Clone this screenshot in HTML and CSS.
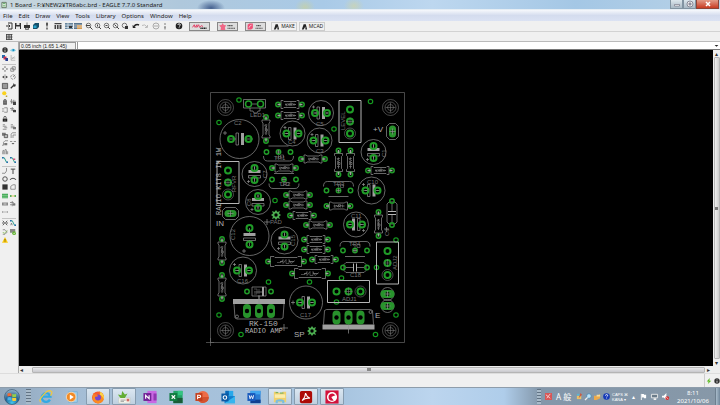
FILE: index.html
```html
<!DOCTYPE html>
<html lang="en">
<head>
<meta charset="utf-8">
<title>1 Board - EAGLE 7.7.0 Standard</title>
<link rel="stylesheet" href="styles.css">
</head>
<body>
<header class="titlebar">
  <svg class="app-icon" viewBox="0 0 8 8"><path d="M1 1h5v6H1z" fill="#f4f8f0" stroke="#59705a"/><path d="M2 2.500h3M2 5h3" stroke="#3c9a45"/></svg>
  <h1>1 Board - F:¥NEW2¥TR6abc.brd - EAGLE 7.7.0 Standard</h1>
  <div class="win-buttons">
    <button aria-label="Minimize"><svg viewBox="0 0 8 8"><path d="M1.500 4.500h5v1.500h-5z" fill="#fff" stroke="#667" stroke-width=".6"/></svg></button>
    <button aria-label="Restore"><svg viewBox="0 0 8 8"><circle cx="4" cy="4" r="3" fill="#eee" stroke="#667" stroke-width=".7"/><circle cx="4" cy="4" r="1.200" fill="#aab" stroke="#667" stroke-width=".6"/></svg></button>
    <button class="close" aria-label="Close"><svg viewBox="0 0 8 8"><path d="M2 2l4 4M6 2l-4 4" stroke="#fff" stroke-width="1.500"/></svg></button>
  </div>
</header>
<nav class="menubar">
  <button>File</button><button>Edit</button><button>Draw</button><button>View</button><button>Tools</button><button>Library</button><button>Options</button><button>Window</button><button>Help</button>
</nav>
<div class="toolbar">
  <div class="group">
    <button aria-label="Open"><svg viewBox="0 0 8 8"><path d="M3 1h4v6H3M1 4h4M3.500 2.500L5 4 3.500 5.500" fill="none" stroke="#333"/></svg></button>
    <button aria-label="Save"><svg viewBox="0 0 8 8"><path d="M1 1h6v6H1z" fill="#333"/><path d="M2.500 1h3v2h-3zM2 4.500h4V7H2z" fill="#e8e8e8"/></svg></button>
    <button aria-label="Print"><svg viewBox="0 0 8 8"><path d="M1 3h6v3H1z" fill="#333"/><path d="M4 .5v2.500M2.500 6h3v1.500h-3z" fill="#fff" stroke="#444" stroke-width=".7"/></svg></button>
    <button aria-label="CAM"><svg viewBox="0 0 8 8"><path d="M1 3l2-2h4v4L5 7H1z" fill="#16506a"/><path d="M1.500 3.500h3v2.500h-3z" fill="#29a4cc"/></svg></button>
  </div>
  <div class="group"><button aria-label="Schematic"><svg viewBox="0 0 8 8"><path d="M4 .5v4M4 5.500v2M3 2h2" stroke="#333" stroke-width="1.200"/></svg></button></div>
  <div class="group"><button aria-label="Library"><svg viewBox="0 0 8 8"><path d="M.5 1h7v1.200h-7zM.5 3h1.600v4H.5zM3 3h1.600v4H3zM5.500 3h2v4h-2z" fill="#444"/></svg></button></div>
  <div class="group">
    <button aria-label="Script"><svg viewBox="0 0 8 8"><path d="M0 1h8v6H0z" fill="#68869e"/><path d="M0 3h8M0 5.500h8M3 1v6" stroke="#dfe8ee" stroke-width=".7"/><path d="M4 4h3v2H4z" fill="#333"/></svg></button>
    <button aria-label="ULP"><svg viewBox="0 0 8 8"><path d="M0 1h8v6H0z" fill="#58748c"/><path d="M3 3h5v4H3z" fill="#d49a52"/><path d="M0 3h8M0 5h8" stroke="#eee" stroke-width=".6"/></svg></button>
  </div>
  <div class="group">
    <button aria-label="Zoom fit"><svg viewBox="0 0 8 8"><circle cx="3.500" cy="3.500" r="2.300" class="lens"/><path d="M5 5l2.500 2.500M1 3.500h4" class="ink"/></svg></button>
    <button aria-label="Zoom in"><svg viewBox="0 0 8 8"><circle cx="3.500" cy="3.500" r="2.300" class="lens"/><path d="M5 5l2 2M3.500 2.500v2" class="ink"/></svg></button>
    <button aria-label="Zoom out"><svg viewBox="0 0 8 8"><circle cx="3.500" cy="3.500" r="2.300" class="lens"/><path d="M5 5l2 2M2.500 3.500h2" class="ink"/></svg></button>
    <button aria-label="Redraw"><svg viewBox="0 0 8 8"><circle cx="3.500" cy="3.500" r="2.300" class="lens"/><path d="M5 5l2 2M2.500 2.500l2 2" class="ink"/></svg></button>
    <button aria-label="Zoom select"><svg viewBox="0 0 8 8"><circle cx="3.500" cy="3.500" r="2.300" class="lens"/><path d="M5 5l2 2" class="ink"/><path d="M4 4h3v3H4z" fill="#333"/></svg></button>
  </div>
  <div class="group">
    <button aria-label="Undo"><svg viewBox="0 0 8 8"><path d="M2 4.500Q4 1.500 7 3" fill="none" stroke="#222" stroke-width="1.500"/><path d="M.5 3l3.500 3H.8z" fill="#222"/></svg></button>
    <button aria-label="Redo"><svg viewBox="0 0 8 8"><path d="M1 3.500Q4 1.500 6 5M6.500 3v2.500H4" fill="none" stroke="#bbb"/></svg></button>
  </div>
  <div class="group">
    <button aria-label="Stop"><svg viewBox="0 0 8 8"><circle cx="4" cy="4" r="3" fill="none" stroke="#aaa"/><path d="M2 4h4" stroke="#aaa"/></svg></button>
    <button aria-label="Go"><svg viewBox="0 0 8 8"><path d="M4 1v2M4 4v3.500M3 5.500h2" stroke="#999" stroke-width="1.300"/></svg></button>
  </div>
  <div class="group help">
    <button aria-label="Help"><svg viewBox="0 0 8 8"><circle cx="4" cy="4" r="3.300" fill="#222"/><path d="M2.900 3q0-1.200 1.200-1.200t1.200 1.100Q5.300 3.700 4.100 4.500M4.100 5.400v.8" fill="none" stroke="#fff" stroke-width=".9"/></svg></button>
  </div>
  <div class="badges">
    <button class="badge" aria-label="Design link"><svg viewBox="0 0 20 8"><path d="M2 5l2-3 1 3 2-3v3l2-3 1 3 2-2 2 1" fill="none" stroke="#e23b62" stroke-width="1.100"/><path d="M11 6h7" stroke="#222" stroke-width="1.500" stroke-dasharray="1.500 .5"/></svg></button>
    <button class="badge" aria-label="PCB quote"><svg viewBox="0 0 20 8"><path d="M4.500 0l1.300 2.200L8.500 2.500 7 5l.5 3H2L2.500 5 .5 2.500l2.700-.3z" fill="#ef6685"/><path d="M10 3h6M10 6h9" stroke="#444" stroke-width="1.400" stroke-dasharray="1.300 .5"/></svg></button>
    <button class="badge" aria-label="IDF to 3D"><svg viewBox="0 0 20 8"><path d="M1 2l2-1.500h4V6L5 7.500H1z" fill="#ef4f76"/><path d="M2.500 5.500q1-3 3-3" stroke="#fff" stroke-width=".7" fill="none"/><path d="M11 3h5M10 6h8" stroke="#444" stroke-width="1.400" stroke-dasharray="1.300 .5"/></svg></button>
  </div>
  <div class="partners">
    <button class="partner"><svg viewBox="0 0 8 8"><path d="M1 7.500L3 1.500h2.500L7 7.500H5V4L3 7.500z" fill="#222"/></svg>MAKE</button>
    <button class="partner"><svg viewBox="0 0 8 8"><path d="M1 7.500L3 1.500h2.500L7 7.500H5V4L3 7.500z" fill="#222"/></svg>MCAD</button>
  </div>
</div>
<div class="toolbar second">
  <button aria-label="Grid"><svg viewBox="0 0 8 8"><path d="M1 1h6v6H1z" fill="#bbb"/><path d="M1 1.500h6.500M1 4h6.500M1 6.500h6.500M1.500 1v6M4 1v6M6.500 1v6" stroke="#444" stroke-width=".8"/></svg></button>
</div>
<main class="workspace">
  <aside class="tools">
    <div class="set set-info">
      <button aria-label="Info"><svg viewBox="0 0 8 8"><circle cx="4" cy="4" r="3.600" fill="#333"/><path d="M4 1.800v1M4 3.500v3" stroke="#eee"/></svg></button>
      <button aria-label="Show"><svg viewBox="0 0 8 8"><path d="M.5 4.500Q4 .5 7.500 4.500 4 7.500.5 4.500" fill="#a4def4" stroke="#65b9d6" stroke-width=".6"/><circle cx="4.500" cy="4" r="1.500" fill="#168fbf"/></svg></button>
      <button aria-label="Display"><svg viewBox="0 0 8 8"><path d="M0 0h4v4H0z" fill="#1d6aae"/><path d="M2 2h4v4H2z" fill="#d0304f"/><path d="M4.500 4h3.500v4H4.500z" fill="#253c8e"/></svg></button>
      <button aria-label="Mark"><svg viewBox="0 0 8 8"><path d="M1.500 0v7H7M2 4h5M2 6l4-4" fill="none" stroke="#aaa"/></svg></button>
    </div>
    <div class="set set-edit">
      <button aria-label="Move"><svg viewBox="0 0 8 8"><path d="M4 0l1.200 2H2.800zM4 8l1.200-2H2.800zM0 4l2-1.200v2.400zM8 4L6 2.800v2.400z" fill="#444"/></svg></button>
      <button aria-label="Copy"><svg viewBox="0 0 8 8"><path d="M1 3h4v4H1zM3 1h4v4H3z" class="line"/></svg></button>
      <button aria-label="Mirror"><svg viewBox="0 0 8 8"><path d="M0 4l3-2v4zM8 4L5 2v4z" fill="#444"/><path d="M4 0v8" stroke="#777" stroke-width=".6"/></svg></button>
      <button aria-label="Rotate"><svg viewBox="0 0 8 8"><circle cx="4" cy="4" r="3" class="line" stroke-dasharray="3 1"/><path d="M4 4l3-3" class="line"/></svg></button>
      <button aria-label="Group"><svg viewBox="0 0 8 8"><path d="M.5.500h7v7h-7z" fill="#999" stroke="#444"/></svg></button>
      <button aria-label="Change"><svg viewBox="0 0 8 8"><path d="M1 7l4-4" stroke="#333" stroke-width="1.700"/><path d="M4 3l1-3 1 2 2 0-1 2.500-2 .5z" fill="#333"/></svg></button>
      <button aria-label="Paste"><svg viewBox="0 0 8 8"><circle cx="3" cy="3" r="2.800" fill="#fad21e"/><path d="M5 6h2v2H5z" fill="#b8a13a"/></svg></button>
      <span></span>
      <button aria-label="Delete"><svg viewBox="0 0 8 8"><path d="M1.500 1.500h5v6h-5zM2.500 0h3v1h-3z" fill="#555"/><path d="M3 3v3M5 3v3" stroke="#bbb" stroke-width=".6"/></svg></button>
      <button aria-label="Add"><svg viewBox="0 0 8 8"><path d="M0 3h8M2 0v6M5 1v5M1 5h6" class="line"/><path d="M4 4h4v4H4z" fill="#444"/></svg></button>
      <button aria-label="Pinswap"><svg viewBox="0 0 8 8"><path d="M3 1h4v6H3M0 2.500h3M0 5.500h3" class="line"/></svg></button>
      <button aria-label="Replace"><svg viewBox="0 0 8 8"><path d="M0 2h5M1 4h6M3 0v5" class="line"/><path d="M4 4h4v3H4z" fill="#444"/></svg></button>
      <button aria-label="Lock"><svg viewBox="0 0 8 8"><path d="M2.500 3.500v-1.500a1.500 1.500 0 013 0v1.500" fill="none" stroke="#333"/><path d="M1 3.500h6v4H1z" fill="#222"/><path d="M4 5v1" stroke="#eee"/></svg></button>
      <span></span>
      <button aria-label="Name"><svg viewBox="0 0 8 8"><path d="M1 1h3M1 3h5M3 5h4M1 7h5" class="line"/></svg></button>
      <button aria-label="Value"><svg viewBox="0 0 8 8"><path d="M1 1h3M1 3h5M1 5h3" class="line"/><path d="M4 4h4v3H4z" fill="#777"/></svg></button>
      <button aria-label="Smash"><svg viewBox="0 0 8 8"><path d="M0 1h5v4H0z" fill="#777"/><path d="M3 3.500h4.500v4H3z" fill="#bbb" stroke="#444"/></svg></button>
      <button aria-label="Miter"><svg viewBox="0 0 8 8"><path d="M1.500 8V3L3 1h5M4 8V4h4" class="line"/></svg></button>
      <button aria-label="Split"><svg viewBox="0 0 8 8"><path d="M0 7h2V3l2-2h4" class="line"/><path d="M3 4h4v3H3z" fill="#777"/></svg></button>
      <button aria-label="Optimize"><svg viewBox="0 0 8 8"><path d="M0 2h3M5 2h3" class="line"/><path d="M2 4h4L4 6z" fill="#555"/></svg></button>
      <button aria-label="Meander"><svg viewBox="0 0 8 8"><path d="M1 7V3q0-2 1.500-1v5M4 7V1q2-1 2 1v5M7.500 7V3" class="line"/></svg></button>
      <span></span>
      <button aria-label="Route"><svg viewBox="0 0 8 8"><path d="M1 1h2l3 6h2" fill="none" stroke="#219a86" stroke-width="1.300"/><path d="M0 0h2v2H0zM6 6h2v2H6z" fill="#246bb0"/></svg></button>
      <button aria-label="Ripup"><svg viewBox="0 0 8 8"><path d="M1 1h2l3 6h2" fill="none" stroke="#35a387" stroke-width="1.300"/><path d="M0 0h2v2H0zM6 6h2v2H6z" fill="#246bb0"/><path d="M4 2h3v2H4z" fill="#c65678"/></svg></button>
    </div>
    <div class="set set-draw">
      <button aria-label="Wire"><svg viewBox="0 0 8 8"><path d="M0 7h4l2-3V0" class="line"/></svg></button>
      <button aria-label="Text"><svg viewBox="0 0 8 8"><path d="M1 1.500h6M4 1.500V8" stroke="#444" stroke-width="1.300"/></svg></button>
      <button aria-label="Circle"><svg viewBox="0 0 8 8"><circle cx="4" cy="4" r="3" fill="none" stroke="#444" stroke-width="1.200"/></svg></button>
      <button aria-label="Arc"><svg viewBox="0 0 8 8"><path d="M0 5q4-4 8 0" fill="none" stroke="#444" stroke-width="1.400"/></svg></button>
      <button aria-label="Rectangle"><svg viewBox="0 0 8 8"><path d="M.5.500h7v7h-7z" fill="#333"/></svg></button>
      <button aria-label="Polygon"><svg viewBox="0 0 8 8"><path d="M1 7V3l3-2h3v6z" class="line"/></svg></button>
      <button aria-label="Via"><svg viewBox="0 0 8 8"><path d="M0 1h8v6H0z" fill="#36a34b"/><path d="M0 3h8M0 5.500h8" stroke="#c2edc8" stroke-width=".8"/></svg></button>
      <button aria-label="Signal"><svg viewBox="0 0 8 8"><path d="M0 4h8" stroke="#dfbd2e"/><path d="M0 3h2v2H0zM6 3h2v2H6z" fill="#2a9d47"/></svg></button>
      <button aria-label="Hole"><svg viewBox="0 0 8 8"><path d="M0 2h8v4H0z" fill="#888"/><path d="M2 4h4" stroke="#eee"/></svg></button>
      <button aria-label="Attribute"><svg viewBox="0 0 8 8"><path d="M0 2h5M0 5h7M3 0v7" class="line"/><path d="M4 3h3v3H4z" fill="#777"/></svg></button>
      <button aria-label="Dimension"><svg viewBox="0 0 8 8"><path d="M0 4h8M1 3v2M7 3v2" stroke="#777" stroke-width=".8" stroke-dasharray="2 1"/></svg></button>
    </div>
    <div class="set set-check">
      <button aria-label="Ratsnest"><svg viewBox="0 0 8 8"><path d="M1 1l6 6M7 1L1 7M0 4h8" stroke="#333"/><circle cx="4" cy="4" r="1" fill="#f0f0f0"/></svg></button>
      <button aria-label="Auto"><svg viewBox="0 0 8 8"><path d="M1 1h2l3 6h2" fill="none" stroke="#219a86" stroke-width="1.200"/><path d="M0 0h2v2H0zM6 6h2v2H6z" fill="#246bb0"/><path d="M1 7l1-3 1 3" class="line"/></svg></button>
      <button aria-label="ERC"><svg viewBox="0 0 8 8"><path d="M1 1h3l3 3-3 3H1" class="line"/><path d="M1 4l2 2 4-4" fill="none" stroke="#79b544"/></svg></button>
      <button aria-label="DRC"><svg viewBox="0 0 8 8"><path d="M0 0h7v5H0z" fill="#888"/><circle cx="5.500" cy="5.500" r="2.500" fill="#65b536"/><path d="M4.500 5.500l1 1 1.500-2" fill="none" stroke="#fff" stroke-width=".7"/></svg></button>
      <button aria-label="Errors"><svg viewBox="0 0 8 8"><path d="M4 0l4 7.500H0z" fill="#fbcb13"/><path d="M4 2.500v2.500M4 5.800v1" stroke="#554400"/></svg></button>
    </div>
  </aside>
  <section class="editor">
    <form class="command">
      <output>0.05 inch (1.65 1.45)</output>
      <input type="text" aria-label="Command">
      <button type="button" aria-label="History"><svg viewBox="0 0 8 8"><path d="M1 3h6L4 6z" fill="#222"/></svg></button>
    </form>
    <div class="view">
      <svg class="board" viewBox="19 50 694 316" preserveAspectRatio="xMidYMid meet" role="img" aria-label="Circuit board">
        <defs>
          <circle id="pad" r="2.200"/>
          <circle id="padl" r="3"/>
          <g id="hole" class="thin"><circle r="8"/><circle r="5.500"/><circle r="3"/><path d="M-5 0H5M0-5V5"/></g>
          <g id="res"><path class="silk" d="M-9-4H-7L-6-3H6L7-4H9V4H7L6 3H-6L-7 4H-9zM-11 0h2M9 0h2M-5 0h2l1-1 1 2 1-2 1 2 1-2 1 1h3"/><path class="tiny" d="M-4-1.500v3l2-1M0 1.500v-3h2v3M4-1.500v3"/><g class="pads"><use href="#pad" x="-12"/><use href="#pad" x="12"/></g><path class="lead" d="M-12.500 0h3M9.500 0h3"/></g>
          <g id="resl"><path class="silk" d="M-15.500-5H-12L-11-4H11L12-5H15.500V5H12L11 4H-11L-12 5H-15.500zM-6 0h3M3 0h5"/><path class="tiny" d="M-9 1h4l2-3v4l3-4v4h3v-4l2 4 4-3"/><g class="pads"><use href="#pad" x="-18"/><use href="#pad" x="18"/></g><path class="lead" d="M-18.500 0h3M15.500 0h3"/></g>
          <g id="plates"><path class="silk" d="M-4-6h2.500V6H-4zM-10 0h6M4 0h5"/><path class="fill" d="M1-6h3V6H1z"/><g class="pads large"><use href="#padl" x="-6"/><use href="#padl" x="6"/></g><path class="silk" d="M-6.500 0h2M5 0h2"/></g>
          <g id="cap"><circle class="silk" r="12.500"/><use href="#plates"/><path class="silk" d="M-9-6h3M-7.500-7.500v3"/></g>
          <g id="film"><path class="silk" d="M-9-5H9L11-3V3L9 5H-9L-11 3V-3zM-9 0h7M2 0h7"/><path class="frame" d="M-1.500-4v8M1.500-4v8"/><g class="pads"><use href="#pad" x="-12"/><use href="#pad" x="12"/></g></g>
          <g id="tr"><path class="silk" d="M-15-4q0-5 4-5H11q4 0 4 5M-10 6H10"/><path class="tiny" d="M-3-6h3v3M2-6h3v3H2z"/><g class="pads"><use href="#pad" x="-12"/><use href="#pad"/><use href="#pad" x="12"/></g><path class="silk" d="M-2 0h4M0-2v4"/></g>
          <g id="pot"><path class="frame" d="M-11-21H11V21H-11z"/><g class="pads large"><use href="#padl" y="-12"/><use href="#padl"/><use href="#padl" y="12"/></g><circle class="thin" cy="12" r="5.500"/><path class="thin" d="M-4 0h8M0-4v8"/></g>
          <g id="slot"><rect x="-4" y="-7" width="8" height="14" rx="4" fill="#28932c"/><circle r="2.200" fill="#000"/></g>
          <g id="power"><path class="fill" d="M-26-12H26v5H-26z"/><path class="silk" d="M-25-7l1 14 2 1H22l2-1 1-14M0-7v-9"/><use href="#slot" x="-12"/><use href="#slot"/><use href="#slot" x="12"/><circle class="silk" cx="-22" cy="5.500" r="1.500"/></g>
          <g id="terminal"><path class="silk" d="M-5-6H5L8-3V3L5 6H-5L-8 3V-3z"/><rect x="-6" y="-3.500" width="12" height="7" rx="3.500" fill="#28932c"/><circle r="2" fill="#164c18"/><path class="silk" d="M-3 0h6M0-3v6"/></g>
          <g id="post"><circle class="silk" r="6.500"/><rect x="-7" y="-4" width="14" height="8" rx="4" fill="#28932c"/><circle r="2.200" fill="#0b250c"/><path class="silk" d="M-3 0h6M0-3v6"/></g>
          <g id="star"><path d="M0-5l1.500 2 2.500-1-1 2.500 2 1.500-2 1.500 1 2.500-2.500-1L0 5l-1.500-2-2.500 1 1-2.500L-5 0l2-1.500-1-2.500 2.500 1z" fill="#4cad50"/><circle r="1.700" fill="#000"/></g>
        </defs>
        <path class="thin" d="M210.500 92.500h194v250h-194zM206 342.500h8M210.500 338v8"/>
        <use href="#hole" x="225.500" y="107.500"/><use href="#hole" x="390.500" y="107.500"/><use href="#hole" x="225.500" y="330.500"/><use href="#hole" x="390.500" y="330.500"/>
        <path class="silk" d="M243.500 99.500h22v8.500h-22zM250 108v3h3l1 2h3l1-2h2v-3M252 104h5"/>
        <g class="pads">
          <use href="#padl" x="248.500" y="104"/><use href="#padl" x="260.500" y="104"/>
          <g class="vias"><use href="#pad" x="239" y="100"/><use href="#pad" x="219" y="122.500"/><use href="#pad" x="370.500" y="101.500"/><use href="#pad" x="334" y="129"/><use href="#pad" x="275" y="200.500"/><use href="#pad" x="268.500" y="282"/><use href="#pad" x="309.500" y="282"/><use href="#pad" x="341.500" y="278"/><use href="#pad" x="376.500" y="267.500"/><use href="#pad" x="336.500" y="302"/><use href="#pad" x="219" y="315"/><use href="#pad" x="241" y="334.500"/><use href="#pad" x="375.500" y="334.500"/><use href="#pad" x="396" y="315"/><use href="#pad" x="396" y="240"/></g>
          <use href="#pad" x="247" y="291.500"/><use href="#pad" x="271" y="291.500"/>
        </g>
        <use href="#res" x="290" y="104.500"/><use href="#res" x="290" y="115.500"/><use href="#res" x="313" y="159"/><use href="#res" x="284" y="168"/><use href="#res" x="380" y="170.500"/><use href="#res" x="298" y="195"/><use href="#res" x="298" y="205"/><use href="#res" x="302" y="215.500"/><use href="#res" x="338.500" y="206"/><use href="#res" x="318" y="225"/><use href="#res" x="316" y="239.500"/><use href="#res" x="316" y="249.500"/><use href="#res" x="324" y="259.500"/>
        <use href="#resl" x="286" y="261.500"/><use href="#resl" x="310" y="273.500"/>
        <use href="#res" transform="translate(266 129) rotate(90)"/><use href="#res" transform="translate(338.500 162.500) rotate(90)"/><use href="#res" transform="translate(350.500 162.500) rotate(90)"/><use href="#res" transform="translate(378.500 224) rotate(90)"/><use href="#res" transform="translate(222 251) rotate(90)"/><use href="#res" transform="translate(222 287) rotate(90)"/>
        <use href="#film" transform="translate(392 213) rotate(90)"/><use href="#film" x="355" y="267.500"/>
        <circle class="silk" cx="239.500" cy="139" r="19.500"/><path class="silk" d="M236 133h2.500v12H236zM228 139h8M245 139h8M223 133h4M225 131v4"/><path class="fill" d="M241 133h3v12h-3z"/><g class="pads large"><use href="#padl" x="231" y="139"/><use href="#padl" x="248.500" y="139"/></g>
        <use href="#cap" x="292.500" y="133.500"/><use href="#cap" x="321" y="113"/><use href="#cap" x="319.500" y="140.500"/>
        <use href="#cap" transform="translate(373.500 152) rotate(-90)"/><use href="#cap" transform="translate(254.500 174) rotate(-90)"/><use href="#cap" transform="translate(258 202) rotate(-90)"/>
        <circle class="silk" cx="371.500" cy="190.500" r="13.500"/><use href="#plates" x="371.500" y="190.500"/><path class="silk" d="M362 184.500h3M363.500 183v3"/>
        <use href="#cap" transform="translate(356 224.500) rotate(180)"/>
        <circle class="silk" cx="284.500" cy="240.500" r="13.500"/><use href="#plates" transform="translate(284.500 240.500) rotate(-90)"/><path class="silk" d="M277 248.500h3M278.500 247v3"/>
        <circle class="silk" cx="249.500" cy="236" r="19.500"/><path class="silk" d="M243.500 238h12v2.500h-12zM249.500 228v5M249.500 240v6M244 249v4M242 251h4"/><path class="fill" d="M243.500 233h12v3h-12z"/><g class="pads large"><use href="#padl" x="249.500" y="228"/><use href="#padl" x="249.500" y="244.500"/></g>
        <circle class="silk" cx="243" cy="270.500" r="13.500"/><use href="#plates" x="243" y="270.500"/><path class="silk" d="M233 264.500h3M234.500 263v3"/>
        <circle class="silk" cx="306" cy="302.500" r="16.500"/><path class="silk" d="M291 302.500h4M293 300.500v4"/><use href="#plates" x="306" y="302.500"/>
        <use href="#tr" transform="translate(278.500 152) scale(1 -1)"/><use href="#tr" transform="translate(284 179.500) scale(1 -1)"/><use href="#tr" x="338.500" y="190.500"/><use href="#tr" x="355" y="250.500"/>
        <use href="#pot" x="350" y="121.500"/><use href="#pot" x="228" y="182.500"/><use href="#pot" x="387.500" y="263"/><use href="#pot" transform="translate(348.500 291.500) rotate(90) scale(1 -1)"/>
        <path class="silk" d="M252 287h14v9h-14zM254 292h10M259 296v4"/><path class="fill" d="M262 287h2v9h-2z"/><path class="tiny" d="M254 289h3v5h-3M259 289v5"/>
        <use href="#power" x="259" y="311"/><use href="#power" transform="translate(348.500 317.500) rotate(180)"/>
        <use href="#terminal" x="230.500" y="213.500"/><use href="#terminal" transform="translate(392.500 131.500) rotate(90)"/><use href="#post" x="387.500" y="294"/><use href="#post" x="387.500" y="306"/>
        <use href="#star" x="312" y="331"/><use href="#star" x="276" y="215"/>
        <path class="silk" d="M280 328h8M284 324v7M264 222h6M267 219v6M384 229h5M386.500 227v5"/>
        <g class="label">
          <text x="249" y="326" class="wide">RK-150</text><text x="245" y="333">RADIO AMP</text>
          <text transform="translate(221 215) rotate(-90)">RADIO KIT8 IM 1W</text>
          <text x="294" y="337" class="net">SP</text><text x="216" y="226" class="net">IN</text><text x="373" y="132" class="net">+V</text><text x="375" y="318" class="net">E</text>
        </g>
        <g class="part">
          <text x="250" y="117">LED1</text><text x="234" y="125">C2</text><text x="288" y="144">C4</text><text x="316" y="126">C5</text><text x="316" y="153">C3</text><text x="274" y="160">TR1</text><text x="279" y="186">TR2</text><text x="333" y="186">TR3</text><text x="349" y="246">TR4</text><text x="367" y="184">C10</text><text x="351" y="218">C11</text><text x="237" y="283">C16</text><text x="300" y="317">C17</text><text x="350" y="277">C18</text><text x="342" y="301">ADJ1</text><text x="270" y="224">PAD</text>
          <text transform="translate(345 130) rotate(-90)">LEVEL</text><text transform="translate(236 192) rotate(-90)">RFVR</text><text transform="translate(397 270) rotate(-90)">ADJ2</text><text transform="translate(386 157) rotate(-90)">C1</text><text transform="translate(235 240) rotate(-90)">C12</text><text transform="translate(295 246) rotate(-90)">C15</text><text transform="translate(251 206) rotate(-90)">C8</text><text transform="translate(267 178) rotate(-90)">C7</text><text transform="translate(389 236) rotate(-90)">C9</text>
        </g>
      </svg>
      <div class="vscroll" aria-hidden="true"><span>▴</span><i></i><span>▾</span></div>
    </div>
    <div class="hscroll" aria-hidden="true"><span>◂</span><i></i><span>▸</span></div>
  </section>
</main>
<footer class="status">
  <div class="indicators">
    <svg viewBox="0 0 8 8"><path d="M5 0L1 4.500h2.500L2.500 8 7 3.500H4.500z" fill="#5dbb22"/></svg>
    <svg viewBox="0 0 8 8"><circle cx="4" cy="4" r="3.600" fill="#333"/><path d="M4 2v1M4 3.800v2.500" stroke="#fff"/></svg>
  </div>
</footer>
<nav class="taskbar">
  <button class="start" aria-label="Start"><svg viewBox="0 0 16 16"><defs><radialGradient id="orb" cx=".5" cy=".9" r=".9"><stop offset="0" stop-color="#43c8ee"/><stop offset=".5" stop-color="#216395"/><stop offset="1" stop-color="#9cb7cb"/></radialGradient></defs><circle cx="8" cy="8" r="7.500" fill="url(#orb)" stroke="#2c4e68" stroke-width=".6"/><path d="M3.500 4.500q2-1 4 0v3q-2-1-4 0z" fill="#ee6a36"/><path d="M8.200 4.800q2 1 4 0v3q-2 1-4 0z" fill="#95cf49"/><path d="M3.500 8.400q2-1 4 0v3q-2-1-4 0z" fill="#4bb0e8"/><path d="M8.200 8.600q2 1 4 0v3q-2 1-4 0z" fill="#f8cb38"/></svg></button>
  <span class="grip"></span>
  <div class="apps">
    <button aria-label="Internet Explorer"><svg viewBox="0 0 16 16"><path d="M12.500 11A5 5 0 1 1 13 7.500H4" fill="none" stroke="#31a9e4" stroke-width="2.600"/><path d="M2 14Q-1 12 5 5.500T14 1.500q2 1-1 5" fill="none" stroke="#f1c93e" stroke-width="1.400"/></svg></button>
    <button aria-label="Media Player"><svg viewBox="0 0 16 16"><path d="M4 2h10v12H4z" fill="#a8d3ec" stroke="#72aed2"/><circle cx="7" cy="8" r="5.500" fill="#f18a24" stroke="#f7dbb9"/><path d="M5.500 5v6L10 8z" fill="#fff"/></svg></button>
    <button class="open" aria-label="Firefox"><svg viewBox="0 0 16 16"><circle cx="8" cy="8.500" r="6.800" fill="#f85b2b"/><path d="M8 15.300A6.800 6.800 0 0 0 12 3L9 1q3 5-2 7-3-1-4-4-4 10 5 11.300z" fill="#fb8c21"/><path d="M11 2q5 4 3.500 9Q13 6 10 5z" fill="#fbd346"/><circle cx="8" cy="8.500" r="3.400" fill="#7546cf"/><path d="M2 2q1 3 5 3l1 2-3 1z" fill="#f6792b"/></svg></button>
    <button class="open" aria-label="Mail"><svg viewBox="0 0 16 16"><path d="M2 9h13v6H2z" fill="#f8f8ee" stroke="#c1c5bd" stroke-width=".7"/><path d="M4 11.500h6M4 13h4" stroke="#999"/><path d="M11 10h3v3h-3z" fill="#d36b64"/><path d="M1 5l4 1 1-5 3 4 3-1-3 5H4z" fill="#63ad34"/></svg></button>
    <button aria-label="OneNote"><svg viewBox="0 0 16 16"><path d="M5 1h10.500v14H5z" fill="#c968e3"/><path d="M12 4h3.500v4H12zM12 8h3.500v4H12z" fill="#9137b2"/><path d="M.5 3.500h9v9h-9z" fill="#732296"/><path d="M3 10V6l4 4V6" fill="none" stroke="#fff" stroke-width="1.300"/></svg></button>
    <button aria-label="Excel"><svg viewBox="0 0 16 16"><path d="M5 1h10.500v14H5z" fill="#21a366"/><path d="M10 1h5.500v5H10z" fill="#33c481"/><path d="M5 9h10.500v6H5z" fill="#185c37"/><path d="M.5 3.500h9v9h-9z" fill="#107c41"/><path d="M3 6l4 4M7 6l-4 4" stroke="#fff" stroke-width="1.300"/></svg></button>
    <button aria-label="PowerPoint"><svg viewBox="0 0 16 16"><circle cx="9" cy="8" r="6.800" fill="#ed6c47"/><path d="M9 8h6.800A6.800 6.800 0 0 1 5 13.500z" fill="#d35230"/><path d="M.5 3.500h8v9h-8z" fill="#c43e1c"/><path d="M3 10.500V6h2q1.500 0 1.500 1.200T5 8.500H3" fill="none" stroke="#fff" stroke-width="1.200"/></svg></button>
    <button aria-label="Outlook"><svg viewBox="0 0 16 16"><path d="M5 1h9v8H5z" fill="#28a8ea"/><path d="M5 1h4v5H5z" fill="#0a67b5"/><path d="M4 7h12v8H4z" fill="#147dcc"/><path d="M4 15L16 7v8z" fill="#36b5ef"/><path d="M.5 4h8v9h-8z" fill="#0c59a4"/><circle cx="4.500" cy="8.500" r="2" fill="none" stroke="#fff" stroke-width="1.200"/></svg></button>
    <button aria-label="Word"><svg viewBox="0 0 16 16"><path d="M4 1h11.500v14H4z" fill="#2b7cd3"/><path d="M4 1h11.500v4H4z" fill="#41a5ee"/><path d="M4 11h11.500v4H4z" fill="#103f91"/><path d="M.5 3.500h9v9h-9z" fill="#185abd"/><path d="M2.500 6l1 4L5 6.500 6.500 10l1-4" fill="none" stroke="#fff"/></svg></button>
    <button class="open" aria-label="Explorer"><svg viewBox="0 0 16 16"><path d="M1 2h4l1 1h4l1-1h4v12H1z" fill="#f0d06c"/><path d="M2 5h12v4H2z" fill="#fbedac"/><path d="M3 3h3M8 3.500h4" stroke="#58a85d"/><path d="M3 15v-3q5-3 10 0v3h-2.500v-2h-5v2z" fill="#79bde1"/></svg></button>
    <button class="open" aria-label="Acrobat"><svg viewBox="0 0 16 16"><rect x="1" y="1" width="14" height="14" rx="2" fill="#ad0b07"/><path d="M7.500 3.500q1 4 5 6-5-1-9 2.500 4-4 4-8.500z" fill="none" stroke="#fff" stroke-width="1.200"/></svg></button>
    <button class="open" aria-label="EAGLE"><svg viewBox="0 0 16 16"><path d="M.5.500h15v15H.5z" fill="#d3113a"/><circle cx="8" cy="8" r="5.800" fill="#fff"/><path d="M4 8q0-4 5-4l3 2-3 1q-2 2 1 5Q4 13 4 8z" fill="#d3113a"/><path d="M7 8l3-1v4z" fill="#fff"/></svg></button>
  </div>
  <div class="tray">
    <span class="grip"></span>
    <svg viewBox="0 0 8 8"><path d="M0 0h8v8H0z" fill="#d75656"/><path d="M1 2l5 4M6 1L2 6" stroke="#ffd7d7"/></svg>
    <span class="ime">A 般</span>
    <svg viewBox="0 0 8 8"><path d="M1 3h5v4H1z" fill="#e8c36c"/><path d="M5 0l2 2-4 4z" fill="#c95c45"/><path d="M1 2h3" stroke="#55b7d4" stroke-width="2"/></svg>
    <svg viewBox="0 0 8 8"><circle cx="4.500" cy="3.500" r="2.700" fill="#bce2f6" stroke="#4e8bb5"/><path d="M3 5L0 8" stroke="#eee" stroke-width="1.500"/></svg>
    <svg viewBox="0 0 8 8"><path d="M0 3h4l3-2v5L3 8H0z" fill="#edaa4b"/><path d="M3 2h4v2H3z" fill="#f6db9b"/></svg>
    <svg viewBox="0 0 8 8"><circle cx="4" cy="4" r="3.800" fill="#1539b8"/><path d="M2.900 3q0-1.200 1.200-1.200t1.200 1.100Q5.300 3.700 4.100 4.500M4.100 5.400v.8" fill="none" stroke="#fff"/></svg>
    <span class="locks">CAPS ⌘<br>KANA ▾</span>
    <button class="more" aria-label="Show hidden icons">▴</button>
    <svg viewBox="0 0 8 8"><path d="M1.500 1v7" stroke="#fff"/><path d="M2 1h2.500v1H7v4H4.500V5H2z" fill="#fff"/></svg>
    <svg viewBox="0 0 8 8"><path d="M.5 1.500h7v4h-7z" fill="#6b7c8a" stroke="#eee"/><path d="M3 6h3v2H3z" fill="#eee"/></svg>
    <svg viewBox="0 0 8 8"><path d="M0 3h2l3-3v8L2 5H0z" fill="#fff"/><circle cx="6" cy="5.800" r="2.200" fill="#d42d2d"/><path d="M4.800 4.600l2.400 2.400" stroke="#fff" stroke-width=".7"/></svg>
    <time class="clock">8:11<br>2021/10/06</time>
    <button class="desktop" aria-label="Show desktop"></button>
  </div>
</nav>
</body>
</html>
```
FILE: styles.css
```css
* { box-sizing: border-box; }
html, body { height: 100%; }
body {
  margin: 0;
  display: flex;
  flex-direction: column;
  overflow: hidden;
  background: #f0f0f0;
  color: #222;
  font: 6px/8px "Noto Sans", sans-serif;
}
button { border: 0; padding: 0; margin: 0; background: none; color: inherit; font: inherit; }
svg { display: block; overflow: visible; }

.titlebar {
  flex: 0 0 10px;
  display: flex;
  align-items: center;
  gap: 2px;
  padding-left: 1px;
  background:
    radial-gradient(ellipse 14px 8px at 211px 8px, #45618f, transparent),
    radial-gradient(ellipse 10px 8px at 305px 7px, #c0cfb3, transparent),
    radial-gradient(ellipse 10px 8px at 354px 6px, #c6d3bc, transparent),
    linear-gradient(90deg, #c8d6dc, #afc8dc 25%, #a9cae7 45%, #bdd7ef 60%, #a4c7e5 80%, #b8d2e7);
  border-bottom: 1px solid #e5edf4;
}
.titlebar h1 { flex: 1; margin: 0; font: inherit; white-space: nowrap; }
.app-icon { width: 7px; height: 8px; }
.win-buttons { display: flex; align-self: flex-start; margin-right: 1px; }
.win-buttons button {
  width: 13px;
  height: 9px;
  display: grid;
  place-items: center;
  background: linear-gradient(#dce6ec, #a9b9c5);
  border: 1px solid #8294a2;
  border-top: 0;
}
.win-buttons svg { width: 8px; height: 8px; }
.win-buttons .close { width: 23px; background: linear-gradient(#e29a87, #c83b22); border-color: #8c4438; }

.menubar {
  flex: 0 0 11px;
  display: flex;
  align-items: center;
  gap: 6px;
  padding: 0 3px;
  background: linear-gradient(#f6f8fc, #d4dcee 50%, #dbe2f3);
}

.toolbar {
  flex: 0 0 11px;
  display: flex;
  align-items: center;
  gap: 3px;
  padding: 0 5px;
  border-bottom: 1px solid #d2d2d2;
}
.toolbar.second { flex-basis: 10px; border-bottom-color: #bbb; }
.toolbar svg { width: 8px; height: 8px; }
.group { display: flex; gap: 1px; }
.help { margin-left: 3px; }
.lens { fill: #eee; stroke: #777; stroke-width: 1; }
.ink { fill: none; stroke: #444; stroke-width: 1; }
.line { fill: none; stroke: #777; stroke-width: 1; }
.badges { display: flex; gap: 7px; margin-left: 3px; }
.partners { display: flex; gap: 2px; margin-left: 2px; }
.badge { width: 21px; height: 9px; background: #ddd; border: 1px solid #888; }
.toolbar .badge svg { width: 19px; height: 7px; }
.partner {
  display: flex;
  align-items: center;
  justify-content: center;
  gap: 1px;
  width: 26px;
  height: 9px;
  border: 1px solid #ccc;
  font: 5px/7px "Noto Sans", sans-serif;
}
.toolbar .partner svg { width: 7px; height: 7px; }

.workspace { flex: 1; min-height: 0; display: flex; }
.tools {
  flex: 0 0 19px;
  display: flex;
  flex-direction: column;
  gap: 3px;
  padding: 4px 1px 0;
  border-right: 1px solid #aaa;
}
.set { display: grid; grid-template-columns: 8px 8px; justify-content: space-between; align-content: space-between; }
.set button, .set span { width: 8px; height: 8px; display: grid; place-items: center; }
.set svg { width: 6px; height: 6px; }
.set + .set { box-shadow: 0 -2px 0 -1px #c4c4c4; }
.set-info { height: 16px; }
.set-edit { height: 99px; }
.set-draw { height: 49px; }
.set-check { height: 25px; }

.editor { flex: 1; min-width: 0; display: flex; flex-direction: column; }
.command {
  flex: 0 0 8px;
  display: flex;
  background: #fff;
  border-bottom: 1px solid #777;
}
.command output {
  width: 57px;
  padding-left: 1px;
  background: #f0f0f0;
  border: 1px solid #999;
  border-bottom: 0;
  font: 5px/6px "Liberation Sans", sans-serif;
  white-space: nowrap;
}
.command input { flex: 1; min-width: 0; height: 7px; margin-left: 1px; padding: 0; border: 0; border-left: 1px solid #999; font: inherit; }
.command button { width: 7px; display: grid; place-items: center; }
.command svg { width: 5px; height: 5px; }

.view { flex: 1; min-height: 0; display: flex; background: #000; }
.board { flex: 1; min-width: 0; height: 100%; overflow: hidden; }
.vscroll, .hscroll { display: flex; background: #eee; color: #333; font: 6px/7px "DejaVu Sans", sans-serif; }
.vscroll { flex: 0 0 7px; flex-direction: column; align-items: center; }
.vscroll i { flex: 1; width: 6px; border: 1px solid #b5b5b5; border-radius: 1px; background: linear-gradient(#777, #777) center / 3px 3px no-repeat, linear-gradient(90deg, #eee, #ccc); }
.hscroll { flex: 0 0 7px; align-items: center; justify-content: space-between; padding: 0 10px 0 1px; }
.hscroll i { flex: 1; height: 6px; margin: 0 2px 0 9px; border: 1px solid #b5b5b5; border-radius: 1px; background: linear-gradient(#888, #888) center / 4px 3px no-repeat, linear-gradient(#e8e8ea, #c8c8cc); }

.pads { fill: none; stroke: #209c28; stroke-width: 1.500; }
.large { stroke-width: 2; }
.vias { stroke: #159a20; stroke-width: 1.200; }
.silk { fill: none; stroke: #929292; stroke-width: .7; }
.lead { fill: none; stroke: #a0a0a0; stroke-width: 1.500; }
.tiny { fill: none; stroke: #777; stroke-width: .6; }
.thin { fill: none; stroke: #777; stroke-width: .6; }
.frame { fill: none; stroke: #b5b5b5; stroke-width: 1; }
.fill { fill: #a0a0a0; }
.label { fill: #b0b0b0; font: 7px "Liberation Mono", monospace; }
.label .wide { font-size: 8px; }
.label .net { font: 8px "Liberation Sans", sans-serif; }
.part { fill: #777; font: 6px "Liberation Sans", sans-serif; }

.status { flex: 0 0 14px; display: flex; justify-content: flex-end; border-top: 1px solid #ddd; }
.indicators { display: flex; align-items: center; gap: 2px; padding-left: 1px; border-left: 1px solid #ccc; }
.indicators svg { width: 6px; height: 6px; }

.taskbar {
  flex: 0 0 18px;
  display: flex;
  align-items: center;
  background: linear-gradient(90deg, #90a6bb, #a4bdd5 10%, #a8c5e0 48%, #bcd5ee 60%, #afcdea 70%, #8397aa 75%, #8798a8);
  border-top: 1px solid #8e9dab;
}
.start { width: 16px; margin: 0 6px 0 4px; }
.start svg { width: 16px; height: 16px; }
.grip { width: 5px; height: 15px; background: repeating-linear-gradient(#617384 0 1px, #a8bac9 1px 3px); }
.apps { flex: 1; display: flex; gap: 2px; margin-left: 3px; }
.apps button { width: 24px; height: 17px; display: grid; place-items: center; }
.apps .open { background: linear-gradient(#dbe7f1, #bfd0e0); border: 1px solid #879caf; border-radius: 1px; }
.apps svg { width: 14px; height: 14px; }
.tray { display: flex; align-items: center; gap: 2px; color: #fff; }
.tray svg { width: 7px; height: 7px; }
.tray .grip { width: 4px; margin-right: 2px; }
.ime { width: 18px; margin-left: 2px; font: 8px/10px "Noto Sans", "Noto Sans CJK JP", sans-serif; white-space: nowrap; }
.locks { width: 15px; font: 4px/5px "Liberation Sans", sans-serif; white-space: nowrap; }
.more { width: 9px; }
.tray .more ~ svg { margin-right: 2px; }
.clock { width: 40px; text-align: center; }
.desktop { width: 5px; height: 17px; background: linear-gradient(90deg, #a9bccb, #71879b); border-left: 1px solid #6d7f8f; }
```
